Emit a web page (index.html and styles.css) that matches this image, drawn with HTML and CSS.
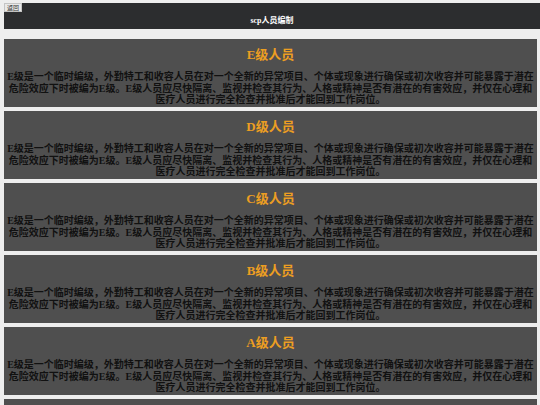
FILE: index.html
```html
<!DOCTYPE html>
<html lang="zh">
<head>
<meta charset="utf-8">
<title>scp人员编制</title>
<link rel="stylesheet" href="styles.css">
</head>
<body>
<header class="topbar">
  <button class="back">返回</button>
  <h1 class="title">scp人员编制</h1>
</header>
<main class="list">
  <section class="card">
    <h2 class="card-title">E级人员</h2>
    <p class="card-text">E级是一个临时编级，外勤特工和收容人员在对一个全新的异常项目、个体或现象进行确保或初次收容并可能暴露于潜在危险效应下时被编为E级。E级人员应尽快隔离、监视并检查其行为、人格或精神是否有潜在的有害效应，并仅在心理和医疗人员进行完全检查并批准后才能回到工作岗位。</p>
  </section>
  <section class="card">
    <h2 class="card-title">D级人员</h2>
    <p class="card-text">E级是一个临时编级，外勤特工和收容人员在对一个全新的异常项目、个体或现象进行确保或初次收容并可能暴露于潜在危险效应下时被编为E级。E级人员应尽快隔离、监视并检查其行为、人格或精神是否有潜在的有害效应，并仅在心理和医疗人员进行完全检查并批准后才能回到工作岗位。</p>
  </section>
  <section class="card">
    <h2 class="card-title">C级人员</h2>
    <p class="card-text">E级是一个临时编级，外勤特工和收容人员在对一个全新的异常项目、个体或现象进行确保或初次收容并可能暴露于潜在危险效应下时被编为E级。E级人员应尽快隔离、监视并检查其行为、人格或精神是否有潜在的有害效应，并仅在心理和医疗人员进行完全检查并批准后才能回到工作岗位。</p>
  </section>
  <section class="card">
    <h2 class="card-title">B级人员</h2>
    <p class="card-text">E级是一个临时编级，外勤特工和收容人员在对一个全新的异常项目、个体或现象进行确保或初次收容并可能暴露于潜在危险效应下时被编为E级。E级人员应尽快隔离、监视并检查其行为、人格或精神是否有潜在的有害效应，并仅在心理和医疗人员进行完全检查并批准后才能回到工作岗位。</p>
  </section>
  <section class="card">
    <h2 class="card-title">A级人员</h2>
    <p class="card-text">E级是一个临时编级，外勤特工和收容人员在对一个全新的异常项目、个体或现象进行确保或初次收容并可能暴露于潜在危险效应下时被编为E级。E级人员应尽快隔离、监视并检查其行为、人格或精神是否有潜在的有害效应，并仅在心理和医疗人员进行完全检查并批准后才能回到工作岗位。</p>
  </section>
  <section class="card"></section>
</main>
</body>
</html>
```

FILE: styles.css
```css
html, body {
  margin: 0;
  padding: 0;
}

body {
  background: #eeeeee;
  font-family: "Liberation Serif", "Noto Sans CJK SC", serif;
  padding-top: 3px;
  height: 405px;
  box-sizing: border-box;
  overflow: hidden;
}

.topbar {
  margin-left: 4px;
  height: 26px;
  background: #2c2d2f;
  display: flex;
  flex-direction: column;
  align-items: flex-start;
}

.back {
  margin: 0;
  padding: 0 2px;
  height: 9px;
  font-size: 6px;
  line-height: 7px;
  font-family: "Noto Sans CJK SC", sans-serif;
  color: #333;
  background: #e8e8e8;
  border: 1px solid #c4c4c4;
  border-radius: 0;
  white-space: nowrap;
}

.title {
  align-self: stretch;
  margin: 3px 0 0 0;
  text-align: center;
  color: #ffffff;
  font-size: 8px;
  line-height: 12px;
  font-weight: bold;
}

.list {
  margin: 10px 3px 0 4px;
  display: flex;
  flex-direction: column;
  gap: 4px;
}

.card {
  background: #4f4f4f;
  height: 68px;
  flex: none;
  padding: 8px 0 0 0;
  box-sizing: border-box;
  text-align: center;
}

.card-title {
  margin: 0;
  font-size: 13px;
  line-height: 16px;
  font-weight: bold;
  color: #ec9e22;
}

.card-text {
  margin: 8px 0 0 0;
  font-size: 10px;
  line-height: 11.5px;
  color: #111111;
  font-weight: bold;
}
```
